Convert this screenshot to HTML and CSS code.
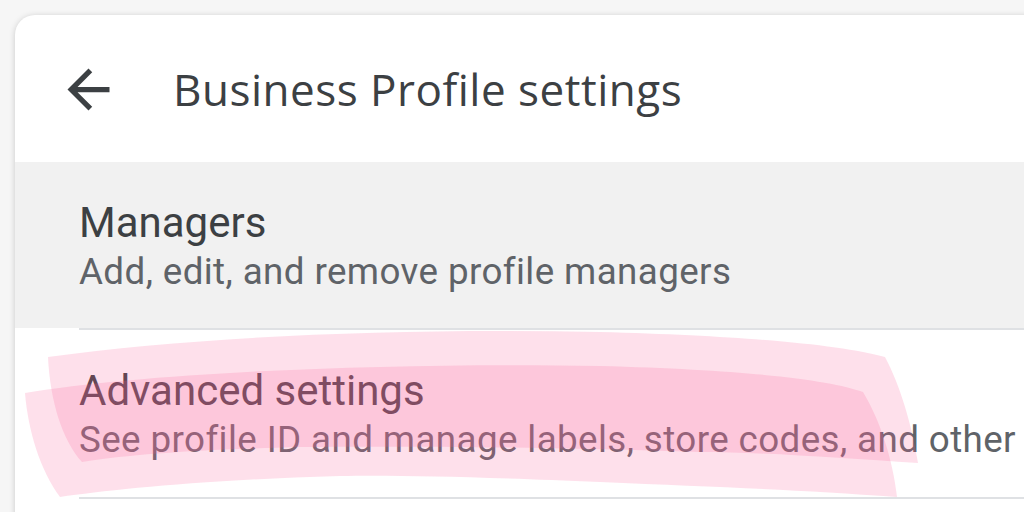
FILE: index.html
```html
<!DOCTYPE html>
<html lang="en">
<head>
<meta charset="utf-8">
<title>Business Profile settings</title>
<link rel="stylesheet" href="styles.css">
</head>
<body>
<div class="page">
  <div class="card">
    <div class="header">
      <svg class="back" viewBox="0 0 24 24" width="63" height="63" aria-hidden="true"><path d="M20 11H7.83l5.59-5.59L12 4l-8 8 8 8 1.41-1.41L7.83 13H20v-2z" fill="#3c4043"/></svg>
      <h1 class="title">Business Profile settings</h1>
    </div>
    <div class="item item-active">
      <div class="item-title">Managers</div>
      <div class="item-sub">Add, edit, and remove profile managers</div>
    </div>
    <div class="divider"></div>
    <div class="item">
      <div class="item-title">Advanced settings</div>
      <div class="item-sub">See profile ID and manage labels, store codes, and other</div>
    </div>
    <div class="divider"></div>
  </div>
</div>
<svg class="marker" viewBox="0 0 1024 512" width="1024" height="512" aria-hidden="true">
  <path class="ink" d="M48,357 C200,336 400,328 600,332 C750,336 840,345 885,357 C900,385 912,425 918,463 C840,458 760,452 700,452 C550,447 400,446 300,447 C180,450 120,456 82,462 C62,440 50,400 48,357 Z"/>
  <path class="ink" d="M25,393 C150,372 400,362 600,366 C750,370 830,380 863,392 C880,420 893,460 897,497 C800,490 720,487 600,482 C480,477 400,475 340,476 C200,480 110,490 60,497 C40,470 28,430 25,393 Z"/>
</svg>
</body>
</html>
```
FILE: styles.css
```css
html, body {
  margin: 0;
  padding: 0;
  width: 1024px;
  height: 512px;
  overflow: hidden;
  background: #f6f6f6;
}
.page {
  padding: 15px 0 0 15px;
}
.card {
  background: #fff;
  border-radius: 20px 0 0 0;
  box-shadow: 0 1px 6px rgba(0,0,0,0.18);
  width: 1040px;
  height: 520px;
}
.header {
  height: 147px;
  display: flex;
  align-items: center;
  padding-left: 42px;
}
.back {
  flex: none;
  display: block;
  margin-top: 1px;
}
.title {
  margin: 0 0 0 53px;
  font-family: "Open Sans", sans-serif;
  font-weight: 400;
  font-size: 44px;
  color: #3c4043;
  letter-spacing: 0.5px;
}
.item {
  padding: 37px 0 31px 64px;
  font-family: Roboto, "Liberation Sans", sans-serif;
}
.item-active {
  background: #f1f1f1;
}
.item + .divider + .item {
  padding-bottom: 32px;
}
.item-title {
  font-size: 42px;
  line-height: 48px;
  color: #3c4043;
}
.item-sub {
  font-size: 36.75px;
  line-height: 50px;
  color: #5f6368;
  letter-spacing: 0.4px;
  white-space: nowrap;
}
.divider {
  height: 2px;
  margin-left: 64px;
  background: #dfe1e4;
}
.marker {
  position: absolute;
  left: 0;
  top: 0;
  pointer-events: none;
}
.ink {
  fill: rgb(250, 100, 155);
  fill-opacity: 0.2;
}
```
